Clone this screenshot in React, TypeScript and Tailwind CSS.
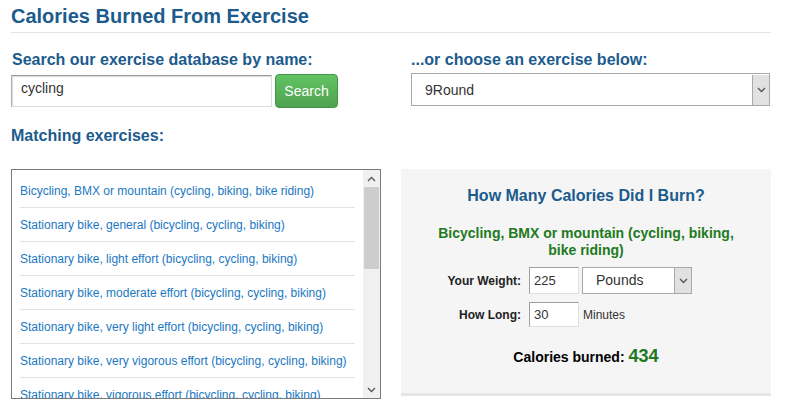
import React from "react";

const exercises = [
  "Bicycling, BMX or mountain (cycling, biking, bike riding)",
  "Stationary bike, general (bicycling, cycling, biking)",
  "Stationary bike, light effort (bicycling, cycling, biking)",
  "Stationary bike, moderate effort (bicycling, cycling, biking)",
  "Stationary bike, very light effort (bicycling, cycling, biking)",
  "Stationary bike, very vigorous effort (bicycling, cycling, biking)",
  "Stationary bike, vigorous effort (bicycling, cycling, biking)",
];

function Chevron({ up = false, className = "" }: { up?: boolean; className?: string }) {
  return (
    <svg width="9" height="6" viewBox="0 0 9 6" className={className}>
      <polyline
        points={up ? "1,5 4.5,1.5 8,5" : "1,1 4.5,4.5 8,1"}
        fill="none"
        stroke="currentColor"
        strokeWidth="1.3"
      />
    </svg>
  );
}

function FakeSelect({ value, className }: { value: string; className: string }) {
  return (
    <div className={`flex bg-white border border-[#a9a9a9] ${className}`}>
      <div className="flex-1 flex items-center pl-[13px] text-[14px] text-[#333]">{value}</div>
      <div className="w-[17px] flex items-center justify-center bg-[#e1e1e1] border-l border-[#a9a9a9] text-[#555]">
        <Chevron />
      </div>
    </div>
  );
}

export default function App() {
  return (
    <div className="w-[786px] h-[403px] overflow-hidden bg-white font-['Liberation_Sans',Arial,sans-serif]">
      <div className="ml-[11px] w-[760px]">
        <h1 className="pt-[5px] pb-[5px] text-[20px] leading-[22px] font-bold text-[#1b5b8d] border-b border-[#e5e5e5]">
          Calories Burned From Exercise
        </h1>

        <div className="flex mt-[18px]">
          <div className="w-[400px]">
            <div className="text-[16px] leading-[18px] font-bold text-[#1b5b8d] pl-px">
              Search our exercise database by name:
            </div>
            <div className="flex items-center mt-[5px]">
              <div className="w-[261px] h-[32px] bg-white border border-[#dcdcdc] border-t-[#9a9a9a] border-l-[#b0b0b0] shadow-[inset_1px_1px_1px_rgba(0,0,0,0.15)] flex items-center pl-[9px] text-[14px] text-[#333]">
                <span className="-mt-[6px]">cycling</span>
              </div>
              <button className="ml-[3px] w-[63px] h-[34px] rounded-[4px] border border-[#46944a] bg-gradient-to-b from-[#62c362] to-[#4fa250] text-white text-[14px]">
                Search
              </button>
            </div>
          </div>
          <div className="flex-1">
            <div className="text-[16px] leading-[18px] font-bold text-[#1b5b8d]">
              ...or choose an exercise below:
            </div>
            <FakeSelect value="9Round" className="mt-[4px] w-[359px] h-[33px] pt-px" />
          </div>
        </div>

        <div className="mt-[19px] text-[16px] leading-[18px] font-bold text-[#1b5b8d]">
          Matching exercises:
        </div>

        <div className="flex gap-[20px] mt-[24px]">
          <div className="w-[370px] h-[230px] border border-[#7a7a7a] flex overflow-hidden">
            <div className="flex-1 pt-[4px] px-[8px] overflow-hidden">
              {exercises.map((e) => (
                <div
                  key={e}
                  className="h-[34px] flex items-center border-b border-[#e3e3e3] text-[12px] text-[#1a78c2] whitespace-nowrap"
                >
                  <span className="pt-[1px]">{e}</span>
                </div>
              ))}
            </div>
            <div className="w-[17px] bg-[#f0f0f0] flex flex-col items-center text-[#555]">
              <div className="h-[17px] flex items-center justify-center">
                <Chevron up />
              </div>
              <div className="w-[15px] h-[82px] bg-[#cdcdcd]" />
              <div className="flex-1" />
              <div className="h-[17px] flex items-center justify-center">
                <Chevron />
              </div>
            </div>
          </div>

          <div className="w-[370px] h-[227px] bg-[#f5f5f5] border-b-[3px] border-[#e6e6e6] flex flex-col items-center">
            <div className="mt-[17px] text-[16px] leading-[20px] font-bold text-[#1b5b8d]">
              How Many Calories Did I Burn?
            </div>
            <div className="mt-[19px] px-[28px] text-center text-[14px] leading-[17px] font-bold text-[#217a21]">
              Bicycling, BMX or mountain (cycling, biking, bike riding)
            </div>
            <div className="mt-[8px] flex flex-col gap-[8px] text-[12px] font-bold text-[#222] w-[370px]">
              <div className="flex items-center">
                <div className="w-[120px] text-right">Your Weight:</div>
                <div className="ml-[8px] w-[50px] h-[27px] bg-white border border-[#e0e0e0] border-t-[#a0a0a0] border-l-[#a0a0a0] flex items-center pl-[4px] text-[13px] font-normal text-[#333]">
                  225
                </div>
                <FakeSelect value="Pounds" className="ml-[3px] w-[110px] h-[27px] font-normal" />
              </div>
              <div className="flex items-center">
                <div className="w-[120px] text-right">How Long:</div>
                <div className="ml-[8px] w-[50px] h-[25px] bg-white border border-[#e0e0e0] border-t-[#a0a0a0] border-l-[#a0a0a0] flex items-center pl-[4px] text-[13px] font-normal text-[#333]">
                  30
                </div>
                <span className="ml-[4px] text-[12px] font-normal text-[#333]">Minutes</span>
              </div>
            </div>
            <div className="mt-[16px] flex items-baseline font-bold">
              <span className="text-[14px] text-black">Calories burned:</span>
              <span className="ml-[4px] text-[18px] text-[#217a21]">434</span>
            </div>
          </div>
        </div>
      </div>
    </div>
  );
}
